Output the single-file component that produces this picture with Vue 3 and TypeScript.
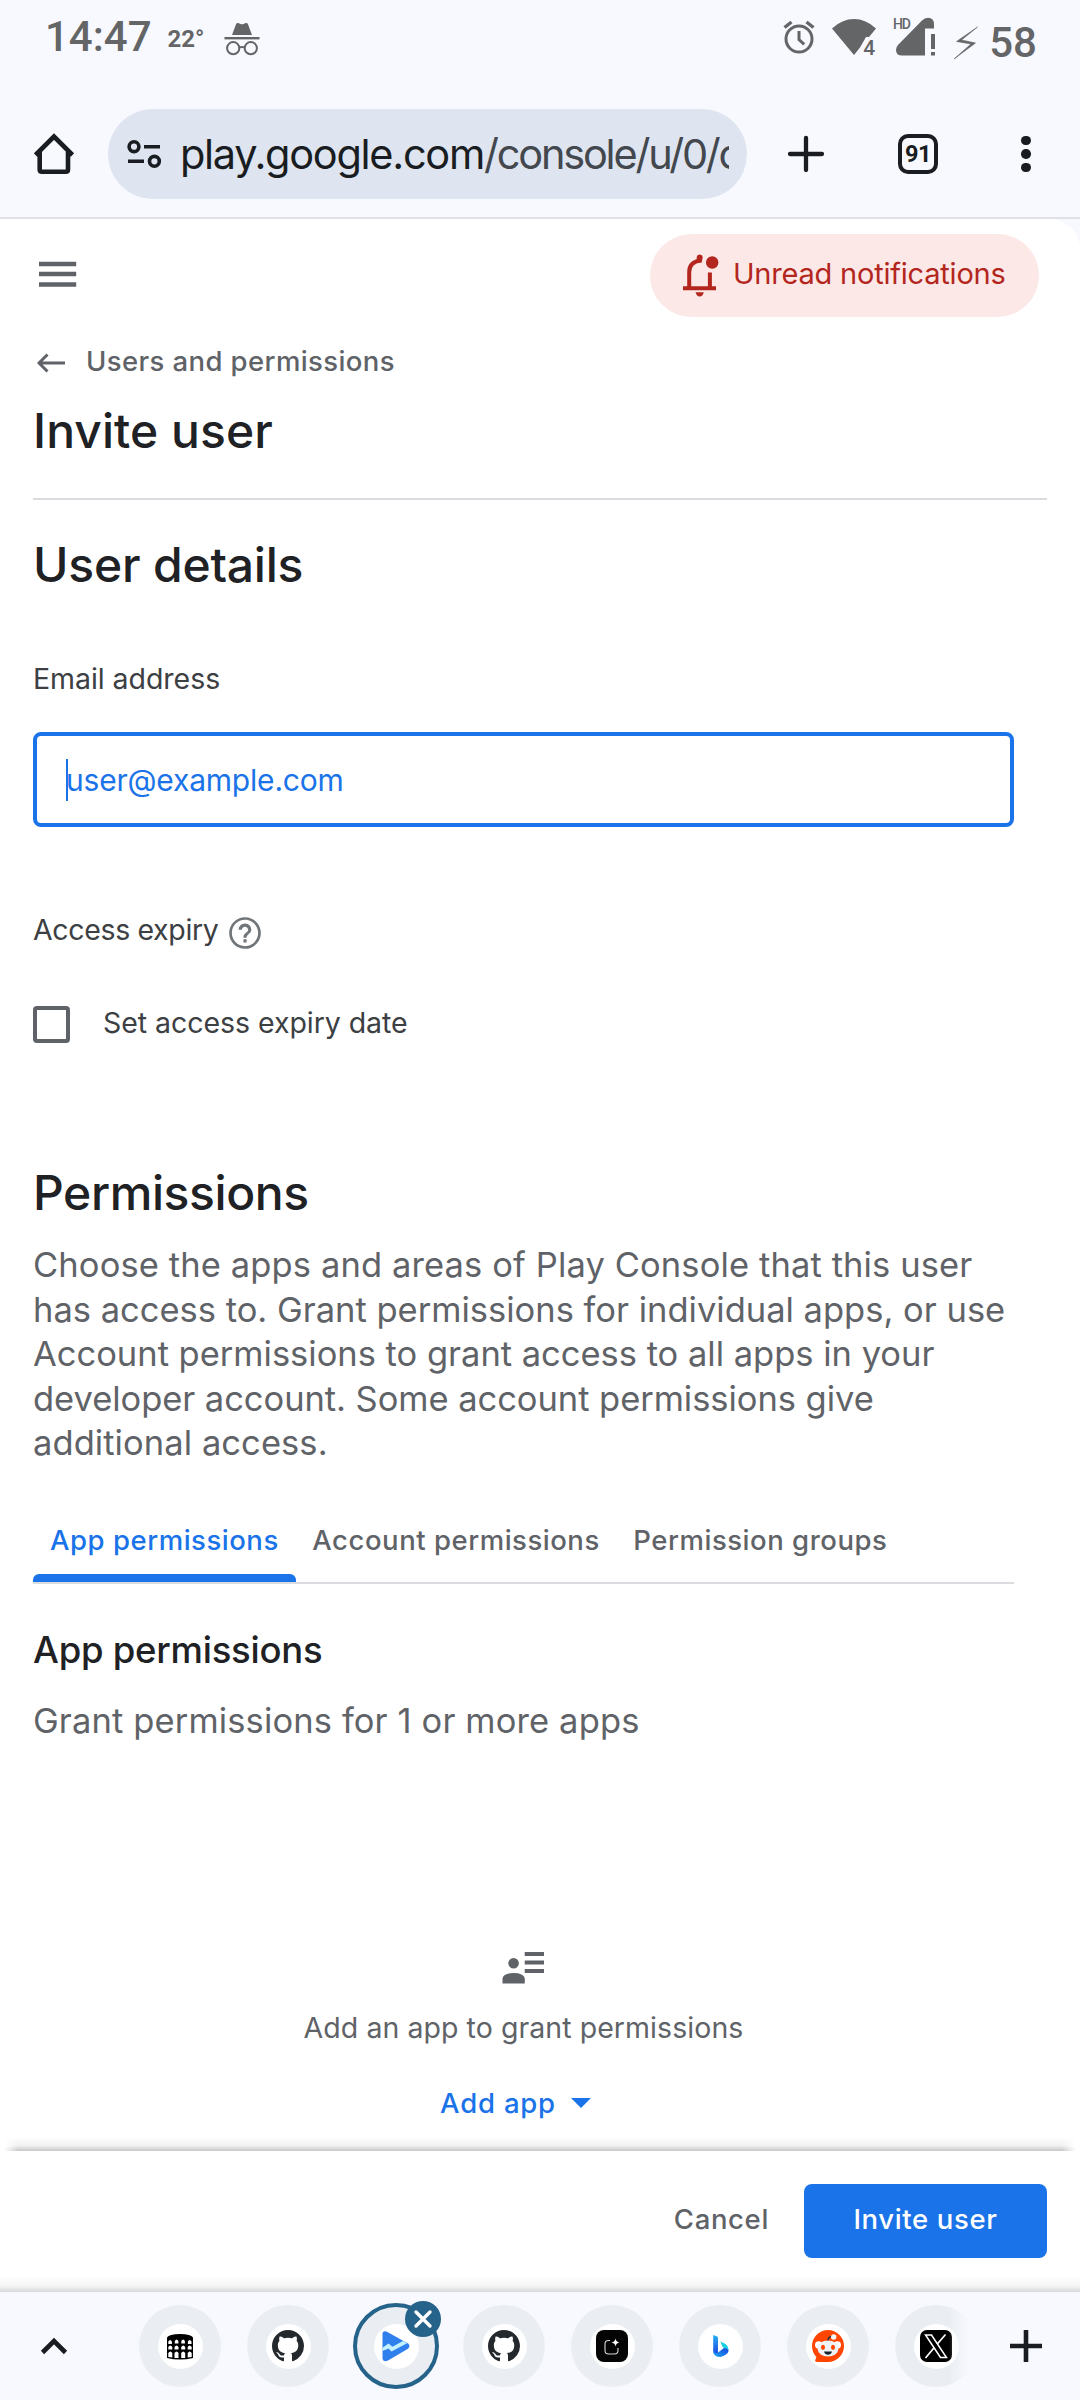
<script setup lang="ts">
interface OpenTab {
  id: number
  kind: 'arena' | 'github' | 'console' | 'spark' | 'bing' | 'reddit' | 'x'
  active?: boolean
}

interface IntroLine {
  text: string
  tracking: number
}

const permissionTabs: string[] = ['App permissions', 'Account permissions', 'Permission groups']

const introLines: IntroLine[] = [
  { text: 'Choose the apps and areas of Play Console that this user', tracking: 0.12 },
  { text: 'has access to. Grant permissions for individual apps, or use', tracking: 0 },
  { text: 'Account permissions to grant access to all apps in your', tracking: -0.01 },
  { text: 'developer account. Some account permissions give', tracking: -0.05 },
  { text: 'additional access.', tracking: 0.07 },
]

const openTabs: OpenTab[] = [
  { id: 1, kind: 'arena' },
  { id: 2, kind: 'github' },
  { id: 3, kind: 'console', active: true },
  { id: 4, kind: 'github' },
  { id: 5, kind: 'spark' },
  { id: 6, kind: 'bing' },
  { id: 7, kind: 'reddit' },
  { id: 8, kind: 'x' },
]
</script>

<template>
  <div class="screen">
    <!-- System status bar -->
    <header class="status">
      <span class="clock">14:47</span>
      <span class="temp">22°</span>
      <svg class="incognito" viewBox="0 0 36 34" width="36" height="34">
        <path d="M8 13 L12 2.2 Q12.6 .6 14.2 1 L16.5 1.9 Q18 2.4 19.5 1.9 L21.8 1 Q23.4 .6 24 2.2 L28 13z" fill="#646567" />
        <rect x=".5" y="15" width="35" height="2.4" fill="#646567" />
        <g fill="none" stroke="#646567" stroke-width="2">
          <circle cx="9.2" cy="26.2" r="6.1" />
          <circle cx="26.8" cy="26.2" r="6.1" />
          <path d="M15.3 25.4q2.7-1 5.4 0" />
        </g>
      </svg>
      <div class="status-right">
        <svg class="alarm" viewBox="0 0 32 34" width="32" height="34">
          <g fill="none" stroke="#646567">
            <circle cx="16" cy="19" r="13" stroke-width="3" />
            <path d="M16 11v8.500l5.200 4.800" stroke-width="3" />
            <path d="M1.500 7.500L8.500 2M30.500 7.500L23.500 2" stroke-width="3.400" />
          </g>
        </svg>
        <svg class="wifi" viewBox="0 0 44 38" width="44" height="38">
          <path d="M22 37L0 10.500Q10 1 22 1t22 9.500L37 19H34L28 29.500z" fill="#646567" />
          <text x="31.300" y="36.500" font-family="Roboto, sans-serif" font-size="21" font-weight="500" fill="#646567">4</text>
        </svg>
        <svg class="signal" viewBox="0 0 44 40" width="44" height="40">
          <text x="0" y="11.500" font-family="Roboto, sans-serif" font-size="14" font-weight="500" fill="#646567" textLength="18">HD</text>
          <path d="M41 11.500V7.500Q41 1 35 .8Q31.500 .8 29 3.500L5 28Q3 30 3 33Q3 38.500 9 38.500H32V11.500z" fill="#646567" />
          <rect x="38" y="17" width="4" height="15" fill="#646567" />
          <rect x="38" y="35" width="4" height="3.500" fill="#646567" />
        </svg>
        <svg class="bolt" viewBox="0 0 24 32" width="24" height="32">
          <path d="M23.500 0L2.500 14.500L17 17L0 32L21.500 16L7.500 13z" fill="#646567" stroke="#646567" stroke-width=".6" />
        </svg>
        <span class="battery">58</span>
      </div>
    </header>

    <!-- Browser toolbar -->
    <div class="toolbar">
      <svg class="home" viewBox="0 0 42 42" width="42" height="42">
        <path d="M2.500 22L21 3.500L39.500 22M6.700 19V36.500Q6.700 38.700 9 38.700H32.800Q35 38.700 35 36.500V19" fill="none" stroke="#191c20" stroke-width="4.600" stroke-linejoin="miter" />
      </svg>
      <div class="omnibox">
        <svg viewBox="0 0 34 28" width="34" height="28">
          <g fill="none" stroke="#191c20" stroke-width="3.600">
            <circle cx="7" cy="6.700" r="4.900" />
            <circle cx="27.400" cy="21.300" r="4.900" />
            <path d="M17 6.700H33M1 21.300H17" />
          </g>
        </svg>
        <div class="url"><span class="host">play.google.com</span><span class="path">/console/u/0/c</span></div>
      </div>
      <svg class="new" viewBox="0 0 36 36" width="36" height="36">
        <path d="M18 2V34M2 18H34" stroke="#191c20" stroke-width="4.300" stroke-linecap="round" />
      </svg>
      <div class="count">91</div>
      <div class="dots"><i></i><i></i><i></i></div>
    </div>

    <!-- Page -->
    <main class="page">
      <div class="topbar">
        <svg viewBox="0 0 38 26" width="38" height="26">
          <path d="M0 3H37.200M0 13H37.200M0 23.500H37.200" stroke="#5f6368" stroke-width="4.300" />
        </svg>
        <button class="unread">
          <svg viewBox="0 0 36 43" width="36" height="43">
            <g fill="none" stroke="#b3261e" stroke-width="4">
              <path d="M0 34.300H33" />
              <path d="M6.200 34V18Q6.200 8 17.500 6.500" />
              <path d="M26.900 34V18.500" />
            </g>
            <path d="M13.700 8V3.500Q14 .5 16.700 .5T19.700 3.500L18.600 8.800z" fill="#b3261e" />
            <circle cx="29.200" cy="8.500" r="6.200" fill="#b3261e" />
            <path d="M12.500 38.300h8.300q-1 4.200-4.100 4.200t-4.200-4.200z" fill="#b3261e" />
          </svg>
          <span>Unread notifications</span>
        </button>
      </div>

      <a class="crumb">
        <svg viewBox="0 0 28 20" width="28" height="20">
          <path d="M28 10H2.500M10.500 1.500L2 10L10.500 18.500" fill="none" stroke="#5f6368" stroke-width="2.900" />
        </svg>
        <span>Users and permissions</span>
      </a>
      <h1>Invite user</h1>
      <hr />

      <h2 class="details">User details</h2>
      <label class="label email">Email address</label>
      <div class="input"><i class="caret"></i><span>user@example.com</span></div>

      <div class="expiry">
        <span class="label tight">Access expiry</span>
        <svg viewBox="0 0 24 24" width="38" height="38" fill="#70757a">
          <path d="M11 18h2v-2h-2v2zm1-16C6.480 2 2 6.480 2 12s4.480 10 10 10 10-4.480 10-10S17.520 2 12 2zm0 18.300c-4.570 0-8.300-3.730-8.300-8.300S7.430 3.700 12 3.700s8.300 3.730 8.300 8.300-3.730 8.300-8.300 8.300zm0-14.300c-2.210 0-4 1.790-4 4h2c0-1.100.9-2 2-2s2 .9 2 2c0 2-3 1.750-3 5h2c0-2.250 3-2.500 3-5 0-2.210-1.790-4-4-4z" />
        </svg>
      </div>
      <div class="check">
        <i class="box"></i>
        <span class="label">Set access expiry date</span>
      </div>

      <h2 class="permissions">Permissions</h2>
      <p class="intro">
        <span v-for="line in introLines" :key="line.text" :style="{ letterSpacing: line.tracking + 'px' }">{{ line.text }}</span>
      </p>

      <nav class="tabs">
        <span v-for="(tab, i) in permissionTabs" :key="tab" class="tab" :class="{ active: i === 0 }">{{ tab }}</span>
      </nav>

      <h3>App permissions</h3>
      <p class="grant">Grant permissions for 1 or more apps</p>

      <section class="empty">
        <svg viewBox="0 0 43 34" width="43" height="34">
          <path d="M22.700 3H42M22.700 11.500H42M22.700 20H42" stroke="#5f6368" stroke-width="4.200" />
          <circle cx="11.600" cy="12.300" r="5.300" fill="#5f6368" />
          <path d="M.5 32.500V27.500Q1.500 22 11.600 22T22.800 27.500V32.500z" fill="#5f6368" />
        </svg>
        <p>Add an app to grant permissions</p>
        <button class="add">
          <span>Add app</span>
          <i class="arrow"></i>
        </button>
      </section>

      <footer class="actions">
        <span class="edge"></span>
        <button class="cancel">Cancel</button>
        <button class="primary">Invite user</button>
      </footer>
    </main>

    <!-- Tab strip -->
    <div class="strip">
      <svg class="chev" viewBox="0 0 28 18" width="28" height="18">
        <path d="M2.500 15.500L14 4L25.500 15.500" fill="none" stroke="#191c20" stroke-width="4.600" />
      </svg>
      <div class="items">
        <div v-for="t in openTabs" :key="t.id" class="item" :class="{ active: t.active }">
          <div class="fav">
            <svg v-if="t.kind === 'arena'" viewBox="0 0 32 32" width="32" height="32">
              <path d="M3 7.500Q5 4 16 4T29 7.500V28Q16 31 3 28z" fill="#000" />
              <g fill="#fff">
                <path d="M4.300 14v-2.500q1.800-3 3.600 0V14zM10.800 13.500V11q1.800-3 3.600 0v2.500zM17.300 13.500V11q1.800-3 3.600 0v2.500zM23.900 14v-2.500q1.800-3 3.600 0V14z" />
                <path d="M4.300 19.500V17q2-3 4 0v2.500zM10.500 19.500V17q2-3 4 0v2.500zM17.200 19.500V17q2-3 4 0v2.500zM23.700 19.500V17q2-3 4 0v2.500z" />
                <path d="M4.300 27V23q2-3 4 0v4.500zM10.500 28V23q2-3 4 0v5zM17.200 28V23q2-3 4 0v5zM23.700 27.500V23q2-3 4 0v4z" />
              </g>
            </svg>
            <svg v-else-if="t.kind === 'github'" viewBox="0 0 16 16" width="32" height="32">
              <path fill="#24292e" d="M8 0C3.580 0 0 3.580 0 8c0 3.540 2.290 6.530 5.470 7.590.4.070.55-.17.55-.38 0-.19-.01-.82-.01-1.490-2.010.37-2.530-.49-2.690-.94-.09-.23-.48-.94-.82-1.130-.28-.15-.68-.52-.01-.53.63-.01 1.080.58 1.230.82.72 1.210 1.870.87 2.330.66.07-.52.28-.87.51-1.070-1.780-.2-3.640-.89-3.640-3.950 0-.87.31-1.590.82-2.150-.08-.2-.36-1.020.08-2.120 0 0 .67-.21 2.200.82.64-.18 1.320-.27 2-.27s1.360.09 2 .27c1.530-1.040 2.200-.82 2.200-.82.44 1.100.16 1.920.08 2.120.51.56.82 1.270.82 2.150 0 3.070-1.870 3.750-3.650 3.950.29.25.54.73.54 1.480 0 1.070-.01 1.930-.01 2.200 0 .21.15.46.55.38A8.010 8.010 0 0 0 16 8c0-4.420-3.580-8-8-8z" />
            </svg>
            <svg v-else-if="t.kind === 'console'" viewBox="0 0 32 32" width="32" height="32">
              <path d="M2.500 3.500Q3 .3 6.500 1.500L28 13.500Q31 16 28 18.700L8 30.500Q3 32.500 2.500 28.500z" fill="#2f80ed" />
              <path d="M2.500 17.800L8.500 13.500L12.500 16.800L23 11L27 13.200L11.500 21.500L8.500 18.500L2.500 21z" fill="#c4f1ff" />
            </svg>
            <svg v-else-if="t.kind === 'spark'" viewBox="0 0 32 32" width="32" height="32">
              <rect width="32" height="32" rx="8" fill="#050505" />
              <path d="M14 10.500H12.500Q9 10.500 9 14V20.500Q9 24 12.500 24H18.500Q22 24 22 20.500V18" fill="none" stroke="#d8d8d8" stroke-width="1.100" />
              <path d="M19.500 8.500Q20 12 23.500 12.500Q20 13 19.500 16.500Q19 13 15.500 12.500Q19 12 19.500 8.500z" fill="#fff" />
            </svg>
            <svg v-else-if="t.kind === 'bing'" viewBox="0 0 32 32" width="32" height="32">
              <defs>
                <linearGradient id="stem" x1="0" y1="0" x2="0" y2="1">
                  <stop offset="0" stop-color="#22b2f7" /><stop offset=".6" stop-color="#246be8" /><stop offset="1" stop-color="#1748e6" />
                </linearGradient>
                <linearGradient id="bowl" x1="0" y1="1" x2="1" y2="0">
                  <stop offset="0" stop-color="#20aaf5" /><stop offset="1" stop-color="#1640dc" />
                </linearGradient>
              </defs>
              <path d="M9.200 5L13.200 6.500Q14 7 14 8V21.500L14 25Q9.200 25 9.200 21z" fill="url(#stem)" />
              <path d="M9.200 21Q11 24 14 22.500L20 18Q24.500 17 24.500 21Q24 24.500 16.500 27Q9.500 27 9.200 21z" fill="url(#bowl)" />
              <path d="M16.500 11.500L21.500 14Q24.500 16 24.500 21Q23.500 18 20 18.200Q18 17 16.500 11.500z" fill="#19cfe0" />
            </svg>
            <svg v-else-if="t.kind === 'reddit'" viewBox="0 0 32 32" width="32" height="32">
              <circle cx="16" cy="16" r="16" fill="#ff4500" />
              <path d="M5 26L3 30.500Q3.500 32 6 32H17z" fill="#ff4500" />
              <path d="M15.800 11Q16 6.500 20.500 6.500" fill="none" stroke="#2b3540" stroke-width="1.600" />
              <circle cx="21.700" cy="7" r="2.700" fill="#f1f5f6" />
              <circle cx="6.700" cy="15" r="3.700" fill="#fff" />
              <circle cx="25.300" cy="15" r="3.700" fill="#fff" />
              <ellipse cx="16" cy="18.500" rx="10.500" ry="8" fill="#eff3f5" />
              <ellipse cx="11" cy="17.300" rx="2" ry="2.600" fill="#ff4500" />
              <ellipse cx="21" cy="17.300" rx="2" ry="2.600" fill="#ff4500" />
              <path d="M12 21.500H20Q19 24.800 16 24.800T12 21.500z" fill="#18222a" />
            </svg>
            <svg v-else viewBox="0 0 32 32" width="32" height="32">
              <rect width="32" height="32" rx="7" fill="#000" />
              <path d="M5.500 5H11.500L26.500 27.500H20.500z" fill="none" stroke="#fff" stroke-width="1.500" />
              <path d="M25.500 4.500L17.300 14M14.300 17.500L5.500 28" stroke="#fff" stroke-width="1.700" />
            </svg>
          </div>
          <span v-if="t.active" class="close">
            <svg viewBox="0 0 18 18" width="18" height="18">
              <path d="M2 2L16 16M16 2L2 16" stroke="#fff" stroke-width="3.400" stroke-linecap="round" />
            </svg>
          </span>
        </div>
      </div>
      <svg class="plus" viewBox="0 0 32 32" width="32" height="32">
        <path d="M16 0V32M0 16H32" stroke="#191c20" stroke-width="4.600" />
      </svg>
    </div>
  </div>
</template>

<style>
body {
  background: #fff;
}
</style>

<style scoped>
* {
  box-sizing: border-box;
}
svg {
  display: block;
  flex: none;
  overflow: visible;
}
button {
  border: 0;
  padding: 0;
  background: none;
  font: inherit;
  letter-spacing: inherit;
}
.screen {
  width: 1080px;
  height: 2400px;
  display: flex;
  flex-direction: column;
  overflow: hidden;
  background: #f8f9ff;
  font-family: Inter, sans-serif;
  white-space: nowrap;
}

/* status bar */
.status {
  height: 92px;
  padding: 0 43px 0 45px;
  display: flex;
  align-items: flex-start;
  color: #646567;
  font-family: Roboto, sans-serif;
}
.clock {
  margin-top: 12px;
  width: 122.500px;
  font-size: 42px;
  line-height: 50px;
  font-weight: 500;
}
.temp {
  margin-top: 25px;
  width: 56.500px;
  font-size: 24px;
  line-height: 28px;
  font-weight: 700;
}
.incognito {
  margin-top: 22px;
}
.status-right {
  margin-left: auto;
  display: flex;
  align-items: flex-start;
}
.alarm {
  margin-top: 20px;
}
.wifi {
  margin: 18px 0 0 17px;
}
.signal {
  margin: 16.500px 0 0 17px;
}
.bolt {
  margin: 27px 0 0 17px;
}
.battery {
  margin: 18px 0 0 11px;
  font-size: 42px;
  line-height: 50px;
  font-weight: 500;
}

/* toolbar */
.toolbar {
  height: 127px;
  border-bottom: 2px solid #dfe1e7;
  padding: 17px 0 18px 33px;
  display: flex;
  align-items: center;
}
.omnibox {
  margin-left: 33px;
  width: 639px;
  height: 90px;
  border-radius: 45px;
  background: #dee5f0;
  padding: 0 18px 0 19px;
  display: flex;
  align-items: center;
}
.url {
  margin-left: 19px;
  flex: 1;
  overflow: hidden;
  font-size: 41.500px;
  line-height: 60px;
  color: #191c20;
}
.host {
  letter-spacing: -1.300px;
}
.path {
  letter-spacing: -2.200px;
  color: #43474e;
}
.new {
  margin-left: 41px;
}
.count {
  margin-left: 74px;
  width: 40px;
  height: 40px;
  border: 4.500px solid #191c20;
  border-radius: 10px;
  display: flex;
  align-items: center;
  justify-content: center;
  font: 700 23.500px Roboto, sans-serif;
  letter-spacing: -0.500px;
  color: #191c20;
}
.dots {
  margin-left: 83px;
  display: flex;
  flex-direction: column;
  gap: 4px;
}
.dots i {
  width: 9.500px;
  height: 9.500px;
  border-radius: 50%;
  background: #191c20;
}

/* page */
.page {
  height: 2073px;
  padding-left: 33px;
  display: flex;
  flex-direction: column;
  background: #fff;
  border-top-right-radius: 30px;
  overflow: hidden;
}
.topbar {
  margin: 15px 41px 0 6px;
  height: 83px;
  flex: none;
  display: flex;
  align-items: center;
  justify-content: space-between;
}
.topbar > svg {
  margin-top: -3px;
}
.unread {
  width: 389px;
  height: 83px;
  border-radius: 42px;
  background: #fce8e6;
  padding-left: 33px;
  display: flex;
  align-items: center;
  color: #b3261e;
  font-size: 29px;
  letter-spacing: -0.210px;
}
.unread span {
  margin: -4px 0 0 14px;
  line-height: 40px;
}
.crumb {
  margin: 24px 0 0 4px;
  height: 40px;
  flex: none;
  display: flex;
  align-items: center;
  font-size: 27.500px;
  font-weight: 500;
  letter-spacing: 0.400px;
  color: #5f6368;
}
.crumb svg {
  margin-top: 3px;
}
.crumb span {
  margin-left: 21px;
}
h1,
h2 {
  margin: 0;
  height: 60px;
  flex: none;
  font-size: 48px;
  line-height: 60px;
  font-weight: 500;
  color: #202124;
}
h1 {
  margin-top: 20px;
  letter-spacing: 0.050px;
}
hr {
  margin: 37px 33px 0 0;
  width: 1014px;
  height: 2px;
  flex: none;
  border: 0;
  background: #dadce0;
}
.details {
  margin-top: 35px;
  letter-spacing: -0.200px;
}
.label {
  font-size: 28.500px;
  line-height: 40px;
  letter-spacing: -0.050px;
  color: #3c4043;
}
.tight {
  letter-spacing: -0.350px;
}
.email {
  margin-top: 64px;
}
.input {
  margin-top: 33px;
  width: 981px;
  height: 95px;
  flex: none;
  border: 4px solid #1a73e8;
  border-radius: 8px;
  padding-left: 29px;
  display: flex;
  align-items: center;
  font-size: 30px;
  letter-spacing: -0.200px;
  color: #1a73e8;
}
.caret {
  width: 2px;
  height: 42px;
  margin-right: -2px;
  background: #1a73e8;
}
.expiry {
  margin-top: 83px;
  height: 40px;
  flex: none;
  display: flex;
  align-items: center;
}
.expiry svg {
  margin: 6px 0 0 7.500px;
}
.check {
  margin-top: 56px;
  height: 37px;
  flex: none;
  display: flex;
  align-items: center;
}
.box {
  width: 37px;
  height: 37px;
  border: 4px solid #5f6368;
  border-radius: 4px;
}
.check .label {
  margin: -4px 0 0 33px;
}
.permissions {
  margin-top: 120px;
  letter-spacing: -0.400px;
}
.intro {
  margin: 20px 0 0;
  display: flex;
  flex-direction: column;
  font-size: 34.500px;
  line-height: 44.600px;
  color: #5f6368;
}
.tabs {
  margin-top: 54px;
  width: 981px;
  height: 64px;
  flex: none;
  border-bottom: 2px solid #dadce0;
  display: flex;
}
.tab {
  padding: 0 17px;
  height: 62px;
  font-size: 27.500px;
  line-height: 40px;
  font-weight: 500;
  letter-spacing: 0.530px;
  color: #5f6368;
}
.tab + .tab {
  margin-left: -0.500px;
}
.tab.active {
  color: #1a73e8;
}
.tab.active::after {
  content: '';
  display: block;
  margin: 14px -17px 0;
  height: 8px;
  border-radius: 6px 6px 0 0;
  background: #1a73e8;
}
h3 {
  margin: 41px 0 0;
  font-size: 36.500px;
  line-height: 50px;
  font-weight: 500;
  letter-spacing: -0.250px;
  color: #202124;
}
.grant {
  margin: 24px 0 0;
  font-size: 34.500px;
  line-height: 44px;
  letter-spacing: 0.130px;
  color: #5f6368;
}
.empty {
  margin-top: 208px;
  width: 981px;
  display: flex;
  flex-direction: column;
  align-items: center;
}
.empty p {
  margin: 23px 0 0;
  font-size: 28.500px;
  line-height: 40px;
  letter-spacing: 0.060px;
  color: #5f6368;
}
.add {
  margin: 35px 16px 0 0;
  height: 40px;
  display: flex;
  align-items: center;
  font-size: 27.500px;
  font-weight: 500;
  letter-spacing: 0.800px;
  color: #1a73e8;
}
.arrow {
  margin: 1px 0 0 15px;
  border: 10px solid transparent;
  border-top-color: #1a73e8;
  border-bottom: 0;
}
.actions {
  position: relative;
  margin: auto 0 0 -33px;
  height: 141px;
  flex: none;
  padding: 0 33px 1px 0;
  display: flex;
  align-items: center;
  justify-content: flex-end;
  font-size: 27.500px;
  font-weight: 500;
  letter-spacing: 0.650px;
  background: linear-gradient(rgba(0, 0, 0, 0), rgba(0, 0, 0, 0.040) 60%, rgba(0, 0, 0, 0.150)) bottom / 100% 16px no-repeat, #fff;
}
.edge {
  position: absolute;
  left: 4px;
  right: 4px;
  top: -14px;
  height: 14px;
  background: linear-gradient(rgba(0, 0, 0, 0), rgba(0, 0, 0, 0.050) 60%, rgba(0, 0, 0, 0.220));
  mask-image: linear-gradient(90deg, transparent, #000 14px, #000 calc(100% - 14px), transparent);
}
.cancel {
  height: 74px;
  padding-bottom: 4px;
  color: #5f6368;
}
.primary {
  margin-left: 35px;
  width: 243px;
  height: 74px;
  padding-bottom: 4px;
  border-radius: 8px;
  background: #1a73e8;
  color: #fff;
}

/* bottom tab strip */
.strip {
  height: 108px;
  flex: none;
  padding-left: 40px;
  display: flex;
  align-items: center;
}
.items {
  margin-left: 71px;
  padding-left: 28px;
  width: 859px;
  height: 108px;
  flex: none;
  display: flex;
  align-items: center;
  gap: 26px;
  overflow: hidden;
  mask-image: linear-gradient(90deg, #000 838px, transparent 859px);
}
.chev + .items {
  margin-left: 43px;
}
.chev {
  margin-left: 0;
}
.item {
  position: relative;
  width: 82px;
  height: 82px;
  flex: none;
  border-radius: 50%;
  background: #eaeef3;
  display: flex;
  align-items: center;
  justify-content: center;
}
.item.active {
  width: 86px;
  height: 86px;
  margin: 0 -2px;
  border: 4.500px solid #25638a;
}
.fav {
  width: 45px;
  height: 45px;
  border-radius: 50%;
  background: #fff;
  display: flex;
  align-items: center;
  justify-content: center;
}
.close {
  position: absolute;
  right: -6px;
  top: -6px;
  width: 36px;
  height: 36px;
  border-radius: 50%;
  background: #25638a;
  display: flex;
  align-items: center;
  justify-content: center;
}
.plus {
  margin-left: 40px;
}
</style>
